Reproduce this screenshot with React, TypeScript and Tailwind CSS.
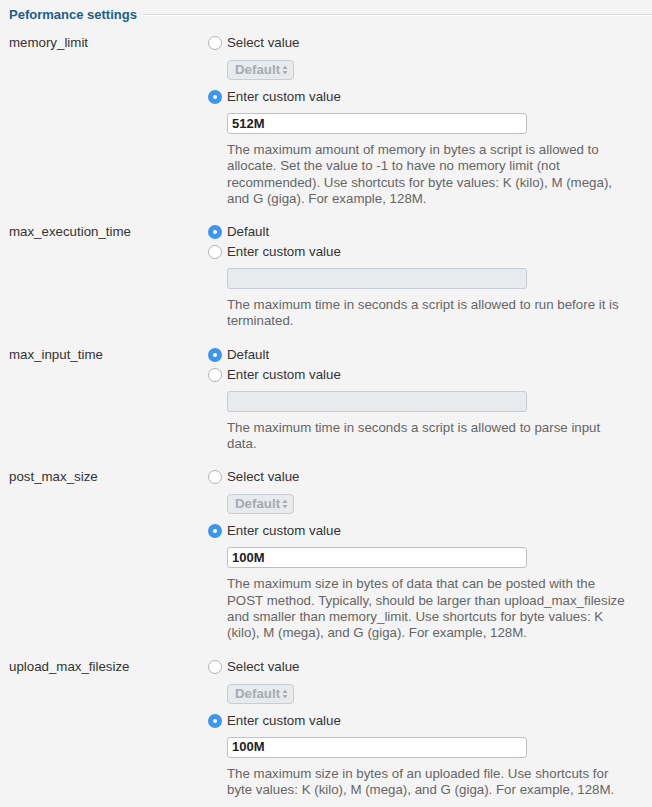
import React from 'react';

type Setting = {
  name: string;
  kind: 'select' | 'default';
  custom: boolean;
  value: string;
  desc: string[];
};

const settings: Setting[] = [
  {
    name: 'memory_limit',
    kind: 'select',
    custom: true,
    value: '512M',
    desc: [
      'The maximum amount of memory in bytes a script is allowed to',
      'allocate. Set the value to -1 to have no memory limit (not',
      'recommended). Use shortcuts for byte values: K (kilo), M (mega),',
      'and G (giga). For example, 128M.',
    ],
  },
  {
    name: 'max_execution_time',
    kind: 'default',
    custom: false,
    value: '',
    desc: [
      'The maximum time in seconds a script is allowed to run before it is',
      'terminated.',
    ],
  },
  {
    name: 'max_input_time',
    kind: 'default',
    custom: false,
    value: '',
    desc: ['The maximum time in seconds a script is allowed to parse input', 'data.'],
  },
  {
    name: 'post_max_size',
    kind: 'select',
    custom: true,
    value: '100M',
    desc: [
      'The maximum size in bytes of data that can be posted with the',
      'POST method. Typically, should be larger than upload_max_filesize',
      'and smaller than memory_limit. Use shortcuts for byte values: K',
      '(kilo), M (mega), and G (giga). For example, 128M.',
    ],
  },
  {
    name: 'upload_max_filesize',
    kind: 'select',
    custom: true,
    value: '100M',
    desc: [
      'The maximum size in bytes of an uploaded file. Use shortcuts for',
      'byte values: K (kilo), M (mega), and G (giga). For example, 128M.',
    ],
  },
];

const Radio = ({ checked, label }: { checked: boolean; label: string }) => (
  <div className="flex items-center h-[20px]">
    {checked ? (
      <span className="w-[14px] h-[14px] rounded-full bg-[#3d95f0] flex items-center justify-center">
        <span className="w-[4px] h-[4px] rounded-full bg-white" />
      </span>
    ) : (
      <span className="w-[14px] h-[14px] rounded-full bg-white border border-[#b3b3b3]" />
    )}
    <span className="ml-[5px]">{label}</span>
  </div>
);

const DisabledSelect = () => (
  <div className="mt-[7px] mb-[7px] ml-[19px] w-[67px] h-[20px] rounded-[4px] border border-[#c6cdd3] bg-[#e7ebee] flex items-center pl-[7px] pr-[5px] justify-between">
    <span className="font-bold text-[#a5acb2]">Default</span>
    <svg width="6" height="10" viewBox="0 0 6 10">
      <path d="M3 0.5 L5.5 4 H0.5 Z" fill="#a5acb2" />
      <path d="M3 9.5 L5.5 6 H0.5 Z" fill="#a5acb2" />
    </svg>
  </div>
);

export default function App() {
  return (
    <div className="min-h-screen bg-[#f4f4f4] text-[13.3px] text-[#333] font-['Liberation_Sans',Arial,sans-serif] pb-4">
      <div className="flex items-center pl-[9px] pt-[5px] h-[24px]">
        <h2 className="font-bold text-[#1c5e8c] text-[13px]">Peformance settings</h2>
        <div className="flex-1 ml-[6px] border-t border-[#d8d8d8] border-b border-b-white" />
      </div>

      <div className="mt-[9px] flex flex-col gap-[15px]">
        {settings.map((s) => (
          <div key={s.name} className="flex">
            <div className="w-[208px] shrink-0 pl-[9px] leading-[20px]">{s.name}</div>
            <div className="flex-1">
              {s.kind === 'select' ? (
                <>
                  <Radio checked={false} label="Select value" />
                  <DisabledSelect />
                </>
              ) : (
                <Radio checked label="Default" />
              )}
              <Radio checked={s.custom} label="Enter custom value" />
              <div
                className={`mt-[6px] ml-[19px] w-[300px] h-[21px] rounded-[3px] border flex items-center pl-[4px] ${
                  s.custom ? 'bg-white border-[#b9c1c9]' : 'bg-[#e8ebee] border-[#c5ccd3]'
                }`}
              >
                <span className="font-bold text-[#222] text-[13px]">{s.value}</span>
              </div>
              <div className="mt-[8px] ml-[19px] text-[#666] leading-[16.3px]">
                {s.desc.map((line) => (
                  <div key={line} className="whitespace-nowrap">
                    {line}
                  </div>
                ))}
              </div>
            </div>
          </div>
        ))}
      </div>
    </div>
  );
}
